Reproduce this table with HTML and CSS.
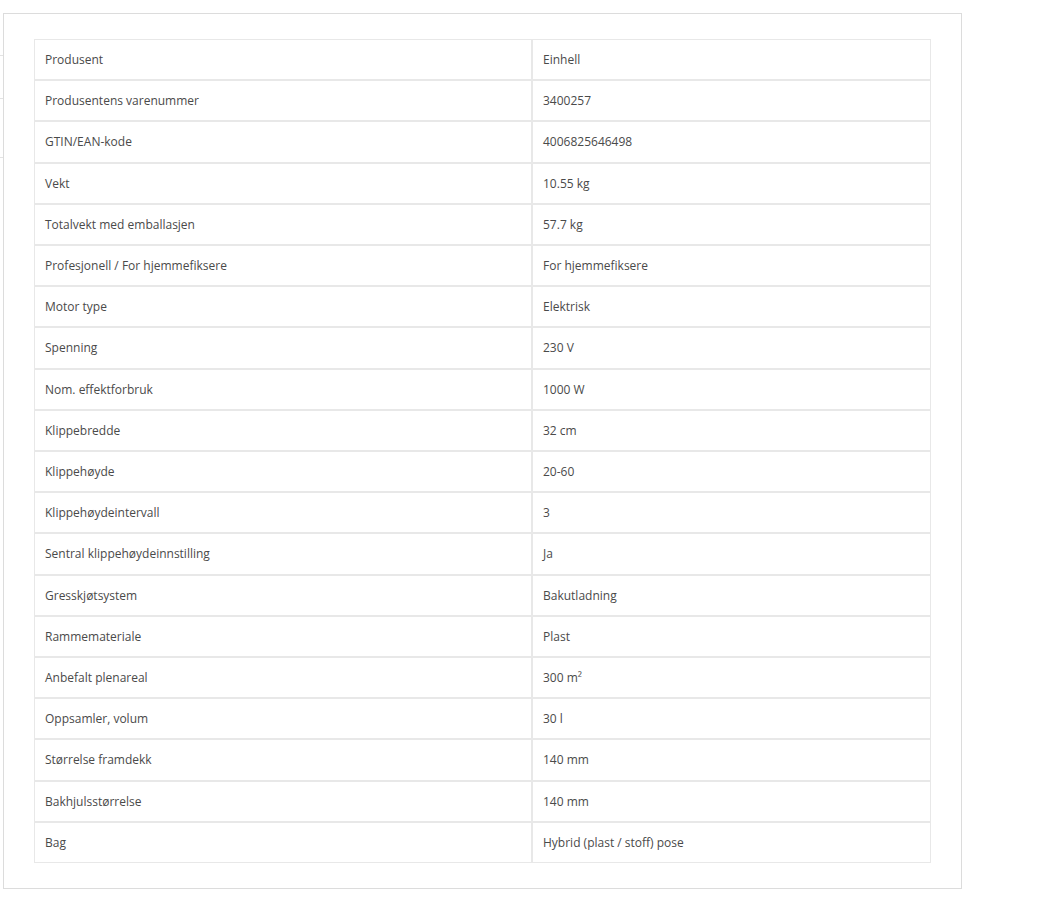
FILE: index.html
```html
<!DOCTYPE html>
<html lang="no">
<head>
<meta charset="utf-8">
<title>Spesifikasjoner</title>
<link rel="stylesheet" href="styles.css">
</head>
<body>
<div class="page">
  <nav class="tabs">
    <div class="tab tab-1"></div>
    <div class="tab tab-2"></div>
    <div class="tab tab-3"></div>
  </nav>
  <section class="panel">
    <table class="specs">
      <tbody>
        <tr><td class="key">Produsent</td><td class="val">Einhell</td></tr>
        <tr><td class="key">Produsentens varenummer</td><td class="val">3400257</td></tr>
        <tr><td class="key">GTIN/EAN-kode</td><td class="val">4006825646498</td></tr>
        <tr><td class="key">Vekt</td><td class="val">10.55 kg</td></tr>
        <tr><td class="key">Totalvekt med emballasjen</td><td class="val">57.7 kg</td></tr>
        <tr><td class="key">Profesjonell / For hjemmefiksere</td><td class="val">For hjemmefiksere</td></tr>
        <tr><td class="key">Motor type</td><td class="val">Elektrisk</td></tr>
        <tr><td class="key">Spenning</td><td class="val">230 V</td></tr>
        <tr><td class="key">Nom. effektforbruk</td><td class="val">1000 W</td></tr>
        <tr><td class="key">Klippebredde</td><td class="val">32 cm</td></tr>
        <tr><td class="key">Klippehøyde</td><td class="val">20-60</td></tr>
        <tr><td class="key">Klippehøydeintervall</td><td class="val">3</td></tr>
        <tr><td class="key">Sentral klippehøydeinnstilling</td><td class="val">Ja</td></tr>
        <tr><td class="key">Gresskjøtsystem</td><td class="val">Bakutladning</td></tr>
        <tr><td class="key">Rammemateriale</td><td class="val">Plast</td></tr>
        <tr><td class="key">Anbefalt plenareal</td><td class="val">300 m²</td></tr>
        <tr><td class="key">Oppsamler, volum</td><td class="val">30 l</td></tr>
        <tr><td class="key">Størrelse framdekk</td><td class="val">140 mm</td></tr>
        <tr><td class="key">Bakhjulsstørrelse</td><td class="val">140 mm</td></tr>
        <tr><td class="key">Bag</td><td class="val">Hybrid (plast / stoff) pose</td></tr>
      </tbody>
    </table>
  </section>
</div>
</body>
</html>
```
FILE: styles.css
```css
html, body {
  margin: 0;
  padding: 0;
  background: #fff;
}

body {
  font-family: "Open Sans", "Liberation Sans", sans-serif;
  font-size: 12px;
  color: #4a4a4a;
}

.page {
  display: flex;
  align-items: flex-start;
  padding-top: 13px;
}

.tabs {
  width: 200px;
  margin-left: -197px;
  flex: none;
  display: flex;
  flex-direction: column;
}

.tab {
  border-bottom: 1px solid #e3e3e3;
}

.tab-1 { height: 42px; }
.tab-2 { height: 42px; }
.tab-3 { height: 58px; }

.panel {
  width: 897px;
  flex: none;
  border: 1px solid #dcdcdc;
  padding: 25px 30px 25px 30px;
}

.specs {
  width: 897px;
  border-collapse: separate;
  border-spacing: 0;
  table-layout: fixed;
}

.specs td {
  border: 1px solid #e8e8e8;
  padding: 10px 10px;
  line-height: 19.2px;
  vertical-align: top;
  color: #4a4a4a;
}

.specs .key {
  width: 476px;
}
```
